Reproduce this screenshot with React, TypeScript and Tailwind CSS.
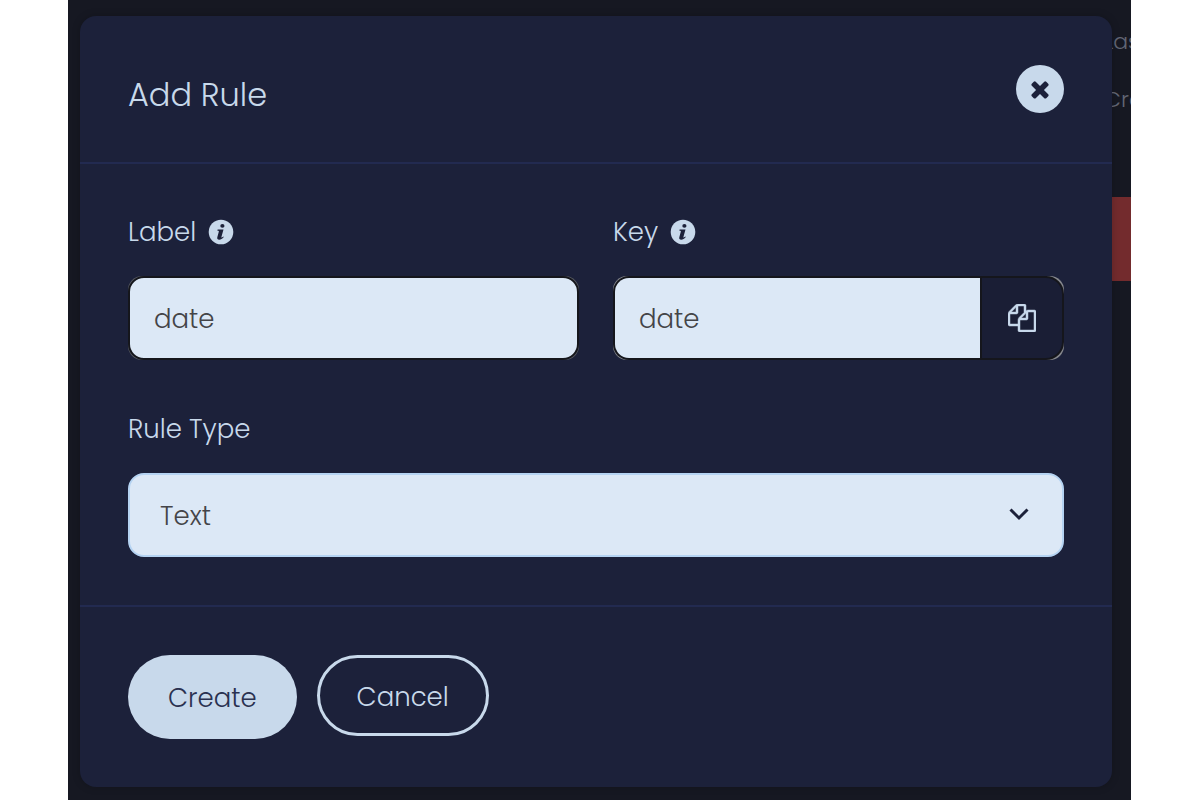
import type { ReactNode } from "react";

function InfoIcon() {
  return (
    <svg viewBox="0 0 26 26" className="size-[26px] shrink-0" aria-hidden="true">
      <circle cx="13" cy="13" r="12.3" fill="#c8d9eb" />
      <g fill="#1c213a">
        <ellipse cx="14.4" cy="6.900" rx="2.1" ry="1.800" />
        <path d="M9.600 10.400h5.900l-2.100 7.500c-.2.9.5.8 1.900-.4l.5.6c-1.600 1.900-3 2.600-4.500 2.600-1.700 0-2.400-1-2-2.500l1.500-5.400c.2-.8 0-1-1.400-1.100z" />
      </g>
    </svg>
  );
}

function CloseIcon() {
  return (
    <svg viewBox="0 0 1792 1792" className="size-[26px]" fill="currentColor" aria-hidden="true">
      <path d="M1490 1322q0 40-28 68l-136 136q-28 28-68 28t-68-28l-294-294-294 294q-28 28-68 28t-68-28l-136-136q-28-28-28-68t28-68l294-294-294-294q-28-28-28-68t28-68l136-136q28-28 68-28t68 28l294 294 294-294q28-28 68-28t68 28l136 136q28 28 28 68t-28 68l-294 294 294 294q28 28 28 68z" />
    </svg>
  );
}

function CopyIcon() {
  return (
    <svg viewBox="0 0 1792 1792" className="size-7" fill="currentColor" stroke="currentColor" strokeWidth="30" aria-hidden="true">
      <path d="M1696 384q40 0 68 28t28 68v1216q0 40-28 68t-68 28h-960q-40 0-68-28t-28-68v-288h-544q-40 0-68-28t-28-68v-672q0-40 20-88t48-76l408-408q28-28 76-48t88-20h416q40 0 68 28t28 68v328q68-40 128-40h416zm-544 213l-299 299h299v-299zm-640-384l-299 299h299v-299zm196 647l316-316v-416h-384v416q0 40-28 68t-68 28h-416v640h512v-256q0-40 20-88t48-76zm956 804v-1152h-384v416q0 40-28 68t-68 28h-416v640h896z" />
    </svg>
  );
}

function FieldLabel({ htmlFor, children, info }: { htmlFor: string; children: ReactNode; info?: boolean }) {
  return (
    <div className="mb-6 flex h-10 items-center gap-3">
      <label htmlFor={htmlFor}>{children}</label>
      {info && <InfoIcon />}
    </div>
  );
}

export default function App() {
  return (
    <div className="min-h-screen bg-white pr-[69px] pl-[68px] font-['Poppins','Inter',sans-serif] text-[26px] font-light text-[#c8d9eb]">
      <div className="relative min-h-screen overflow-hidden bg-[#161822] px-3 py-4">
        <aside className="absolute top-0 right-0 w-[27px] text-[22px] whitespace-nowrap text-[#626675]">
          <p className="mt-6 h-9 leading-9">Last</p>
          <p className="mt-[22px] h-9 leading-9">Created</p>
          <div className="mt-[79px] h-[84px] bg-[#732b2d]" />
        </aside>

        <div
          role="dialog"
          aria-labelledby="dialog-title"
          className="relative mr-[7px] rounded-2xl bg-[#1c213a] shadow-[0_0_8px_rgba(0,0,0,0.2)]"
        >
          <header className="flex h-[148px] items-center justify-between border-b-2 border-[#222a50] px-12">
            <h2 id="dialog-title" className="pt-3 text-[32px]">Add Rule</h2>
            <button type="button" aria-label="Close" className="flex size-12 items-center justify-center rounded-full bg-[#c8d9eb] text-[#1c213a]">
              <CloseIcon />
            </button>
          </header>

          <form>
            <div className="p-12">
              <div className="grid grid-cols-2 gap-[34px]">
                <div>
                  <FieldLabel htmlFor="label" info>Label</FieldLabel>
                  <div className="flex rounded-[14px] bg-[#54575f]">
                    <input
                      id="label"
                      defaultValue="date"
                      className="h-[84px] w-full rounded-2xl border-2 border-[#15161c] bg-[#dce8f6] px-6 pt-0.5 text-[#444448]"
                    />
                  </div>
                </div>
                <div>
                  <FieldLabel htmlFor="key" info>Key</FieldLabel>
                  <div className="flex h-[84px] rounded-[14px] bg-[#85878c]">
                    <input
                      id="key"
                      defaultValue="date"
                      className="min-w-0 flex-1 rounded-l-2xl border-2 border-r-0 border-[#15161c] bg-[#dce8f6] px-6 pt-0.5 text-[#444448]"
                    />
                    <button
                      type="button"
                      aria-label="Copy"
                      className="flex w-[84px] items-center justify-center rounded-r-[18px] border-2 border-[#15161c] bg-[#1a1e35]"
                    >
                      <CopyIcon />
                    </button>
                  </div>
                </div>
              </div>

              <div className="mt-[49px]">
                <FieldLabel htmlFor="type">Rule Type</FieldLabel>
                <div className="relative">
                  <select
                    id="type"
                    className="block h-[84px] w-full appearance-none rounded-2xl border-2 border-[#b5d3f2] bg-[#dce8f6] px-[30px] pt-0.5 text-[#444448]"
                  >
                    <option>Text</option>
                  </select>
                  <svg viewBox="0 0 20 14" className="pointer-events-none absolute top-[35px] right-[35px] h-[14px] w-5" aria-hidden="true">
                    <path d="M1.5 1.500 10 10 18.500 1.500" fill="none" stroke="#1c213a" strokeWidth="3" />
                  </svg>
                </div>
              </div>
            </div>

            <footer className="flex items-start gap-5 border-t-2 border-[#222a50] p-12">
              <button type="button" className="h-[84px] rounded-full bg-[#c8d9eb] px-10 pt-0.5 text-[#2a3150]">Create</button>
              <button type="button" className="h-[81px] rounded-full border-3 border-[#c8d9eb] px-[37px] pt-1">Cancel</button>
            </footer>
          </form>
        </div>
      </div>
    </div>
  );
}
